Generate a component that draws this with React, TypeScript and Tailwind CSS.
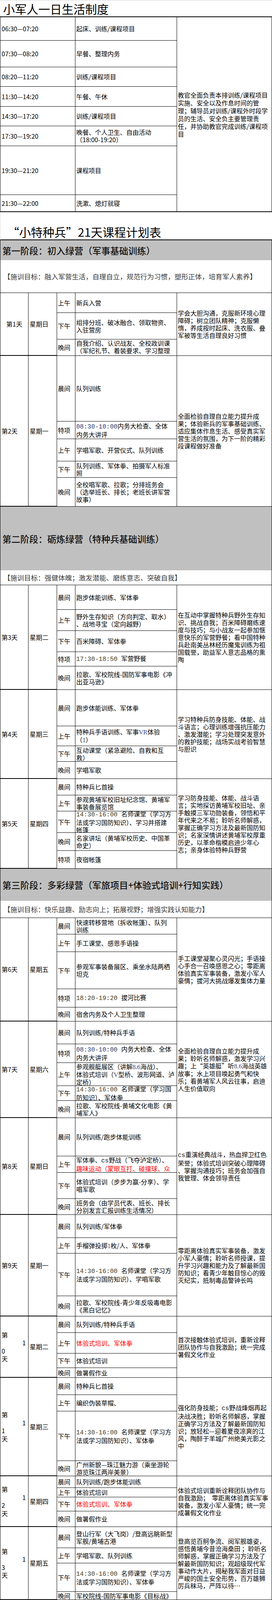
import * as React from "react"

type Part = { h: number; l: string[] }
type Sub = { s: string; h: number; l?: string[]; top?: boolean; clip?: boolean; parts?: Part[] }
type Day = { n: number; w: string; subs: Sub[]; g: string[] }

const daily: [string, string[], number][] = [
  ["06:30—07:20", ["起床、训练/课程项目"], 60],
  ["07:30—08:20", ["早餐、整理内务"], 68],
  ["08:20—11:20", ["训练/课程项目"], 50],
  ["11:30—14:20", ["午餐、午休"], 51],
  ["14:30—17:20", ["训练/课程项目"], 50],
  ["17:30—19:20", ["晚餐、个人卫生、自由活动", "（18:00-19:20）"], 51],
  ["19:30—21:20", ["课程项目"], 125],
  ["21:30—22:00", ["洗漱、熄灯就寝"], 42],
]

const dailyNote = [
  "教官全面负责本排训练/课程项目",
  "实施、安全以及作息时间的管",
  "理；辅导员对训练/课程外时段学",
  "员的生活、安全负主要管理责",
  "任，并协助教官完成训练/课程项",
  "目",
]

const stage1: Day[] = [
  {
    n: 1,
    w: "星期日",
    subs: [
      { s: "上午", h: 51, l: ["新兵入营"] },
      { s: "下午", h: 68, l: ["组排分班、破冰融合、领取物资、", "入驻营房"] },
      { s: "晚间", h: 42, top: true, clip: true, l: ["自我介绍、认识战友、全校政训课", "（军纪礼节、着装要求、学习整理", "内务）"] },
    ],
    g: ["学会大胆沟通，克服新环境心理", "障碍；树立团队精神；克服懒", "惰，养成按时起床、洗衣服、叠", "军被等生活自理良好习惯"],
  },
  {
    n: 2,
    w: "星期一",
    subs: [
      { s: "晨间", h: 168, l: ["队列训练"] },
      { s: "特项", h: 45, l: ["{b:08:30-10:00}内务大检查、全体", "内务大讲评"] },
      { s: "上午", h: 57, l: ["学唱军歌、开营仪式、队列训练"] },
      { s: "下午", h: 42, l: ["队列训练、军体拳、拍摄军人标准", "照"] },
      { s: "晚间", h: 74, l: ["全校唱军歌、拉歌；分排班务会", "（选举班长、排长；老班长讲军营", "故事）"] },
    ],
    g: ["全面检验自理自立能力提升成", "果；体验新兵的军事基础训练、", "适应集体作息生活、感受真实军", "营生活的氛围，为下一阶的精彩", "段课程做好准备"],
  },
]

const stage2: Day[] = [
  {
    n: 3,
    w: "星期二",
    subs: [
      { s: "晨间", h: 63, l: ["跑步体能训练、军体拳"] },
      { s: "上午", h: 54, l: ["野外生存知识（方向判定、取水）", "、战地寻宝（定向越野）"] },
      { s: "下午", h: 54, l: ["百米障碍、军体拳"] },
      { s: "特项", h: 37, l: ["{o:17:30-18:50 }军营野餐"] },
      { s: "晚间", h: 60, l: ["拉歌、军校院线-国防军事电影《冲", "出亚马逊》"] },
    ],
    g: ["在互动中掌握特种兵野外生存知", "识、挑战自我；百米障碍磨练速", "度与技巧；与小战友一起参加惬", "意快乐的军营野餐；看中国特种", "兵赴南美丛林经历魔鬼训练为祖", "国载誉，助益军人意志品格的熏", "陶"],
  },
  {
    n: 4,
    w: "星期三",
    subs: [
      { s: "晨间", h: 93, l: ["跑步体能训练、军体拳"] },
      { s: "上午", h: 51, l: ["特种兵手语训练、军事{v:VR}体验", "（{v:1}）"] },
      { s: "下午", h: 40, l: ["互动课堂（紧急避险、自救和互", "救）"] },
      { s: "晚间", h: 44, l: ["学唱军歌"] },
    ],
    g: ["学习特种兵防身技能、体能、战", "斗语言；心理训练增强抗压能力", "、激发潜能；学习处理突发意外", "的救护技能；战场实战考验智慧", "与胆识"],
  },
  {
    n: 5,
    w: "星期四",
    subs: [
      { s: "晨间", h: 42, l: ["特种兵匕首操"] },
      { s: "上午", h: 41, l: ["参观黄埔军校旧址纪念馆、黄埔军", "事装备展览馆"] },
      { s: "下午", h: 55, clip: true, l: ["{o:14:30-16:00 }名师课堂（学习方", "法或学习国防知识）、学习并搭建", "帐篷"] },
      { s: "晚间", h: 46, l: ["名家讲坛（黄埔军校历史、中国革", "命史）"] },
      { s: "特项", h: 46, l: ["夜宿帐篷"] },
    ],
    g: ["学习防身技能、体能、战斗语", "言；实地探访黄埔军校旧址、亲", "手触摸三军功勋装备，领悟和平", "年代来之不易；聆听名师解惑，", "掌握正确学习方法及最新国防知", "识；名家深情讲述黄埔军校厚重", "历史，以革命楷模启迪少年心", "志；亲身体验特种兵野营"],
  },
]

const stage3: Day[] = [
  {
    n: 6,
    w: "星期五",
    subs: [
      { s: "晨间", h: 42, l: ["快速转移营地（拆收帐篷）、队列", "训练"] },
      { s: "上午", h: 45, l: ["手工课堂、感恩手语操"] },
      { s: "下午", h: 95, l: ["参观军事装备展区、乘坐水陆两栖", "坦克"] },
      { s: "特项", h: 47, l: ["{o:18:20-19:20 }拔河比赛"] },
      { s: "晚间", h: 36, l: ["宿舍内务及个人卫生整理"] },
    ],
    g: ["手工课堂凝聚心灵闪光；手语操", "心手合一召唤感恩之心；零距离", "体验真实军事装备，激发小军人", "豪情；拔河大挑战爆发集体力量"],
  },
  {
    n: 7,
    w: "星期六",
    subs: [
      { s: "晨间", h: 58, l: ["队列训练/特种兵手语"] },
      { s: "特项", h: 48, l: ["{b:08:30-10:00 }内务大检查、全体", "内务大讲评"] },
      { s: "上午", h: 59, clip: true, l: ["参观舰艇展区（讲解{v:8.6}海战）、", "体验式培训（{v:V}型桥、波形网道、泸", "定桥）"] },
      { s: "下午", h: 38, l: ["{o:14:30-16:00 }名师课堂（学习国", "防知识）、军体拳"] },
      { s: "晚间", h: 44, l: ["拉歌、军校院线-黄埔文化电影《黄", "埔军人》"] },
    ],
    g: ["全面检验自理自立能力提升成", "果；聆听名师解惑，激发学习兴", "趣；上“英雄艇”听{v:8.6}海战英雄", "故事；水上项目唤起勇气和快", "乐；看黄埔军人风云往事，启迪", "人生价值取向"],
  },
  {
    n: 8,
    w: "星期日",
    subs: [
      { s: "晨间", h: 98, l: ["队列训练/跑步体能训练"] },
      { s: "上午", h: 42, l: ["军体拳、{c:cs}野战（飞夺泸定桥）、", "{r:趣味运动（蒙眼互打、碰撞球、众}"] },
      { s: "下午", h: 67, l: ["体验式培训（步步为赢-分享）、学", "唱军歌"] },
      { s: "晚间", h: 41, l: ["班务会（由学员代表、班长、排长", "分别发言汇报训练生活情况）"] },
    ],
    g: ["{c:cs}重演经典战斗，热血捍卫红色", "荣誉；体验式培训突破心理障碍", "、掌握沟通技巧；班务会加强自", "我管理、体会领导责任"],
  },
  {
    n: 9,
    w: "星期一",
    subs: [
      { s: "晨间", h: 59, l: ["队列训练/军体拳"] },
      { s: "上午", h: 40, l: ["手榴弹投掷{v:1}枚/人、军体拳"] },
      { s: "下午", h: 109, l: ["{o:14:30-16:00 }名师课堂（学习方", "法或学习国防知识）、学唱军歌"] },
      { s: "晚间", h: 52, l: ["拉歌、军校院线-青少年反吸毒电影", "《黑白记忆》"] },
    ],
    g: ["零距离体验真实军事装备，激发", "小军人豪情；聆听名师授课，提", "升学习兴趣和能力及了解最新国", "防知识；看青少年触目惊心的毁", "灭纪实，抵制毒品警钟长鸣"],
  },
  {
    n: 10,
    w: "星期二",
    subs: [
      { s: "晨间", h: 42, l: ["队列训练/特种兵手语"] },
      { s: "上午", h: 53, l: ["{r:体验式培训、军体拳}"] },
      { s: "下午", h: 37, l: ["体验式培训"] },
      { s: "晚间", h: 25, l: ["做暑假作业"] },
    ],
    g: ["首次接触体验式培训，重新诠释", "团队协作与自我激励；统一完成", "暑假文化作业"],
  },
  {
    n: 11,
    w: "星期三",
    subs: [
      { s: "晨间", h: 44, l: ["特种兵匕首操"] },
      { s: "上午", h: 42, l: ["编织伪装草帽、"] },
      { s: "下午", h: 127, l: ["{o:14:30-16:00 }名师课堂（学习方", "法或学习国防知识）、军体拳"] },
      { s: "晚间", h: 39, l: ["广州新貌—珠江魅力游（乘坐游轮", "游览珠江两岸美景）"] },
    ],
    g: ["强化防身技能；{c:cs}野战烽烟再起", "决战决胜；聆听名师解惑，掌握", "正确学习方法及了解最新国防知", "识；放轻松—迎着夏夜凉爽的江", "风，陶醉于羊城广州绝美光影之", "中"],
  },
  {
    n: 12,
    w: "星期四",
    subs: [
      { s: "晨间", h: 30, l: ["队列训练/跑步体能训练"] },
      { s: "上午", h: 24, l: ["体验式培训"] },
      { s: "下午", h: 36, l: ["{r:体验式培训、军体拳}"] },
      { s: "晚间", h: 40, l: ["做暑假作业"] },
    ],
    g: ["体验式培训重新诠释团队协作与", "自我激励；  零距离体验真实军事", "装备，激发小军人豪情；统一完", "成暑假文化作业"],
  },
  {
    n: 13,
    w: "星期五",
    subs: [
      { s: "晨间", h: 54, l: ["登山行军（大飞岗）/登高远眺新型", "军舰/黄埔古港"] },
      { s: "上午", h: 39, l: ["学唱军歌、队列训练"] },
      { s: "下午", h: 73, l: ["{o:14:30-16:00 }名师课堂（学习方", "法或学习国防知识）、军体拳"] },
      { s: "晚间", h: 21, l: ["军校院线-国防军事电影《目标战》"] },
    ],
    g: ["登高览百舸争流、阅军舰雄姿，", "感悟黄埔今昔沧海桑田 ；聆听名", "师解惑，掌握正确学习方法及了", "解最新国防知识；观超级现代军", "事动作大片，揭秘我军面对日益", "严峻的国土安全形势，百万雄狮", "厉兵秣马，严阵以待…"],
  },
  {
    n: 14,
    w: "星期六",
    subs: [
      { s: "晨间", h: 38, l: ["队列训练/特种兵手语"] },
      { s: "特项", h: 39, l: ["{b:08:30-10:00 }内务大检查、全体", "内务大讲评"] },
      { s: "上午", h: 39, l: ["百米障碍训练"] },
      { s: "下午", h: 40, l: ["野外拉练（河涌路{v:5}公里）"] },
      { s: "晚间", h: 41, l: ["做暑假作业"] },
    ],
    g: ["全面检验自理自立能力提升成", "果；强化体技能基础训练，是对", "意志与决心的考验；统一完成暑", "假文化作业"],
  },
  {
    n: 15,
    w: "星期日",
    subs: [
      { s: "晨间", h: 25, l: ["队列训练/跑步体能训练"] },
      { s: "上午", h: 22, l: ["体验式培训"] },
      { s: "下午", h: 94, l: ["军事{v:VR}体验（{v:2}）、演讲比赛准备"] },
      { s: "晚间", h: 41, l: ["班务会（主题演讲比赛-快乐黄埔小", "军人）"] },
    ],
    g: ["体验式培训破除团队隔阂、领导", "力与执行力融合共同走向胜利；", "虚拟现实战斗身历其境，勇往直", "前决战决胜；；讲述分享浓浓战", "友情和军旅生活的难事、趣事、", "窘事、乐事"],
  },
  {
    n: 16,
    w: "星期一",
    subs: [
      { s: "晨间", h: 92, l: ["特种兵匕首操"] },
      { s: "上午", h: 39, l: ["体验式培训"] },
      { s: "下午", h: 38, l: ["学唱军歌、体验式培训"] },
      { s: "晚间", h: 40, l: ["拉歌、军校院线-国防军事电影《歼", "十出击》"] },
    ],
    g: ["强化防身技能；体验式培训塑造", "越挫越勇、协作进取的精神内", "核；再次体验团队间协作的重要", "性；看我国新一代空军驾驭歼十", "搏击长空，胜利完成演习和保卫", "祖国领空的故事…"],
  },
  {
    n: 17,
    w: "星期二",
    subs: [
      { s: "晨间", h: 54, l: ["队列训练/军体拳"] },
      { s: "上午", h: 25, l: ["参观广州大学城、广东科学中心"] },
      { s: "下午", h: 20, l: ["{o:14:30-16:00 }做暑假作业、学唱"] },
      { s: "晚间", h: 19, l: ["文艺晚会预案集体策划"] },
    ],
    g: ["参观著名学府，点燃胸中大学梦", "想；体验科学神奇，解码大千世", "界奥秘；有声有色的小晚会筹谋", "与排演，说不定其中就有上大春", "晚的未来之星"],
  },
  {
    n: 18,
    w: "星期三",
    subs: [
      { s: "晨间", h: 53, l: ["队列训练/特种兵手语"] },
      { s: "上午", h: 37, l: ["野外行军{v:5}公里{v:(}参观辛亥革命纪念", "馆{v:)}"] },
      { s: "下午", h: 30, l: ["体验式培训、评选兵王"] },
      { s: "晚间", h: 30, l: ["联欢晚会文艺节目排练"] },
    ],
    g: ["感触中国近代历史，追念为辛亥", "革命事业作出重大贡献的前辈先", "贤；体验式培训破除团队隔阂、", "成功与失败教育、赏识和挫折教", "育结合，助益在挫折中树立坚定", "的信念；"],
  },
]

const stage4: Day[] = [
  {
    n: 19,
    w: "星期四",
    subs: [
      { s: "晨间", h: 108, l: ["队列训练"] },
      { s: "上午", h: 39, l: ["感恩手语操、体验式培训"] },
      { s: "下午", h: 54, l: ["感恩手语操、体验式培训"] },
      { s: "晚间", h: 40, l: ["拉歌、军校院线-感恩励志电影《背", "起爸爸上学》"] },
    ],
    g: ["手语操心手合一召唤感恩之心；", "体验式培训展现个人担当与集体", "力量、人与人的相互理解、信任", "和帮助，体会心灵的真善美，培", "育对家人、社会与大自然表达感", "恩关爱的心理正能量；看真实事", "迹电影，感悟同龄少年责任感"],
  },
  {
    n: 20,
    w: "星期五",
    subs: [
      { s: "晨间", h: 21, l: ["军体拳"] },
      { s: "特项", h: 91, l: ["{b:08:30-10:00 }内务大检查、全体", "内务大讲评"] },
      { s: "上午", h: 57, l: ["{b:10:10 }写作文《绿营印迹》（{b:800}", "字以上）"] },
      { s: "下午", h: 24, l: ["“绿营印迹”作文朗读赏析评优"] },
      { s: "晚间", h: 41, l: ["拉歌、绿营狂欢夜（生日晚会/结营", "联欢晚会）"] },
    ],
    g: ["检验自理自立能力提升成果；以“", "绿营印迹”为题书写参加本届夏令", "营心路历程（收获与感悟）绿营", "印迹”小战友分享交流；在小战友", "祝福中度过值得一生珍藏的军营", "生日，缤纷多彩的绿营之夜艺蕾", "绽放与星月同辉"],
  },
  {
    n: 21,
    w: "星期六",
    subs: [
      { s: "晨间", h: 22, l: ["特种兵匕首操/感恩手语操"] },
      {
        s: "上午",
        h: 212,
        parts: [
          { h: 59, l: ["{b:08:30-09:20  }队列训练、唱军", "歌"] },
          { h: 21, l: ["{b:08:30-09:30  }结营仪式（会操/"] },
          { h: 112, l: ["{b:09:40-10:50  }合影留念"] },
          { h: 20, l: ["{b:11:00  }归还物品、挥别军校"] },
        ],
      },
    ],
    g: ["会操表演英姿焕发，成绩献给父", "母、更是给自己！因为付出所以", "饱含收获，“小军人”精神的种子", "已经播撒在心灵，带着小战友难", "舍的情谊挥别军校，去努力追逐", "明天的梦想！"],
  },
]

const mono = "font-['Liberation_Mono',monospace] text-[16px]"

// {b:..} blue time, {o:..} olive time, {r:..} red, {v:..} latin, {c:..} mono
function Rich({ s }: { s: string }) {
  const parts = s.split(/(\{[a-z]:[^}]*\})/)
  return (
    <>
      {parts.map((p, i) => {
        const m = p.match(/^\{([a-z]):([^}]*)\}$/)
        if (!m) return p ? <span key={i}>{p}</span> : null
        const [, k, t] = m
        if (k === "b") return <span key={i} className={`${mono} text-[#2f3d6e]`}>{t}</span>
        if (k === "o") return <span key={i} className={`${mono} text-[#4a3d1e]`}>{t}</span>
        if (k === "r") return <span key={i} className="text-[#ff0000]">{t}</span>
        if (k === "v") return <span key={i} className="font-['Liberation_Serif',serif] text-[#34447a]">{t}</span>
        return <span key={i} className={`${mono} text-[#222]`}>{t}</span>
      })}
    </>
  )
}

function Lines({ l }: { l: string[] }) {
  return (
    <>
      {l.map((x, i) => (
        <div key={i} className="whitespace-pre">
          <Rich s={x} />
        </div>
      ))}
    </>
  )
}

function DayLabel({ n }: { n: number }) {
  if (n === 1) return <div className="text-center">第1天</div>
  if (n < 10) return <div className="pl-[3px]">第{n}天</div>
  return (
    <div className="flex flex-col pl-[3px] leading-[20.5px]">
      <span>第</span>
      <span className="pr-[6px] text-right">{Math.floor(n / 10)}</span>
      <span>{n % 10}</span>
      <span>天</span>
    </div>
  )
}

function DayBlock({ d }: { d: Day }) {
  const total = d.subs.reduce((a, s) => a + s.h, 0)
  return (
    <div className="flex overflow-hidden" style={{ height: total }}>
      <div className="flex w-[72px] shrink-0 flex-col justify-center border-r border-b-2 border-black">
        <DayLabel n={d.n} />
      </div>
      <div className="flex w-[73px] shrink-0 items-center border-r border-b-2 border-black pl-[3px]">
        {d.w}
      </div>
      <div className="flex w-[307px] shrink-0 flex-col">
        {d.subs.map((s, i) => (
          <div key={i} className="flex shrink-0 border-b border-black" style={{ height: s.h }}>
            <div className="flex w-[47px] shrink-0 items-center border-r border-black pl-[2px]">{s.s}</div>
            {s.parts ? (
              <div className="flex w-[260px] shrink-0 flex-col border-r border-black">
                {s.parts.map((p, j) => (
                  <div
                    key={j}
                    className={`flex shrink-0 flex-col justify-center pl-[2px] ${j < s.parts!.length - 1 ? "border-b border-black" : ""}`}
                    style={{ height: p.h }}
                  >
                    <Lines l={p.l} />
                  </div>
                ))}
              </div>
            ) : (
              <div
                className={`flex w-[260px] shrink-0 flex-col border-r border-black pl-[2px] ${s.top ? "justify-start" : "justify-center"} ${s.clip ? "overflow-hidden" : ""}`}
              >
                <Lines l={s.l ?? []} />
              </div>
            )}
          </div>
        ))}
      </div>
      <div className="flex min-w-0 flex-1 flex-col justify-center border-b border-black pl-[2px]">
        <Lines l={d.g} />
      </div>
    </div>
  )
}

function Stage({ title, th, goal, gh, days }: { title: string; th: number; goal: string; gh: number; days: Day[] }) {
  return (
    <>
      <div className="flex items-center bg-[#c0c0c0] pl-[5px] text-[23px] font-medium leading-[30px] text-[#111]" style={{ height: th }}>
        {title}
      </div>
      <div className="flex items-center border-b border-black pl-[8px] text-[17.5px] leading-[22px] text-[#3a3a3a]" style={{ height: gh }}>
        {goal}
      </div>
      {days.map((d) => (
        <DayBlock key={d.n} d={d} />
      ))}
    </>
  )
}

export default function App() {
  return (
    <div className="w-[696px] bg-white text-[16px] leading-[19px] text-black font-['Noto_Sans_CJK_SC',sans-serif]">
      {/* 一日生活制度 */}
      <div className="flex h-[44px] items-center border-t border-b-2 border-t-[#d0d0d0] border-b-black pl-[8px] text-[30px] leading-[36px]">
        小军人一日生活制度
      </div>
      <div className="flex h-[499px] border-x border-b-2 border-black">
        <div className="flex w-[452px] shrink-0 flex-col">
          {daily.map(([t, c, h], i) => (
            <div key={t} className={`flex shrink-0 ${i < daily.length - 1 ? "border-b border-black" : ""}`} style={{ height: h }}>
              <div className="flex w-[192px] shrink-0 items-center border-r border-black pl-[3px]">{t}</div>
              <div className="flex w-[260px] shrink-0 flex-col justify-center border-r border-black pl-[2px]">
                {c.map((x) => (
                  <div key={x} className="whitespace-nowrap">{x}</div>
                ))}
              </div>
            </div>
          ))}
        </div>
        <div className="flex min-w-0 flex-1 flex-col justify-center pl-[2px] leading-[20px]">
          {dailyNote.map((x) => (
            <div key={x} className="whitespace-nowrap">{x}</div>
          ))}
        </div>
      </div>

      {/* 21天课程计划表 */}
      <div className="flex h-[72px] items-end border-l border-b-2 border-l-[#d9d9d9] border-b-black pb-[2px] pl-[18px] text-[30px] leading-[36px]">
        “小特种兵”21天课程计划表
      </div>
      <div className="border-x border-b-2 border-black">
        <Stage title="第一阶段：初入绿营（军事基础训练）" th={51} goal="【施训目标：融入军营生活，自理自立，规范行为习惯，塑形正体，培育军人素养】" gh={84} days={stage1} />
        <Stage title="第二阶段：砺炼绿营（特种兵基础训练）" th={163} goal="【施训目标：强健体魄；激发潜能、磨练意志、突破自我】" gh={38} days={stage2} />
        <Stage title="第三阶段：多彩绿营（军旅项目+体验式培训+行知实践）" th={82} goal="【施训目标：快乐益趣、励志向上；拓展视野；增强实践认知能力】" gh={44} days={stage3} />
        <Stage title="第四阶段：收获绿营（体验式培训+感恩教育）" th={31} goal="【施训目标：完善人格品质；召唤感恩之心；培育价值观；树立责任感】" gh={24} days={stage4} />
      </div>

      <div className="flex h-[18px]">
        <div className="w-[72px] border-r border-[#e0e0e0]" />
        <div className="w-[590px] border-r border-[#e0e0e0]" />
        <div className="w-[5px] border-r border-[#e0e0e0]" />
      </div>
      <div className="h-[21px] overflow-hidden whitespace-nowrap pl-[4px] leading-[22px]">
        备注：本计划可能因天气及其它不确定因素而发生变化，请以带排教官实际操作为准。
      </div>
    </div>
  )
}
